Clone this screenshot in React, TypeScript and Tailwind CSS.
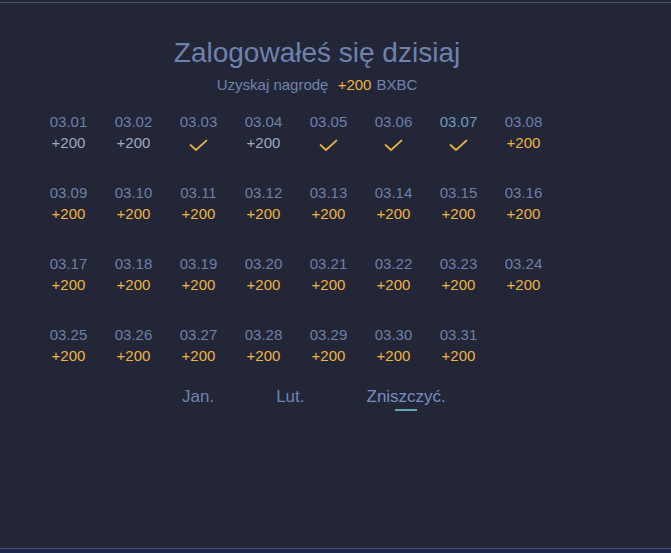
import React from 'react';

type Day = { date: string; state: 'done' | 'past' | 'todo'; today?: boolean };

const days: Day[] = Array.from({ length: 31 }, (_, i) => {
  const n = i + 1;
  const date = `03.${String(n).padStart(2, '0')}`;
  let state: Day['state'] = 'todo';
  if ([3, 5, 6, 7].includes(n)) state = 'done';
  else if (n < 8) state = 'past';
  return { date, state, today: n === 7 };
});

function Check() {
  return (
    <svg width="19" height="13" viewBox="0 0 19 13" fill="none">
      <path d="M1.5 6 L7 11 L17.5 1.5" stroke="#e3b04a" strokeWidth="1.7" strokeLinecap="round" strokeLinejoin="round" />
    </svg>
  );
}

export default function App() {
  const tabs = ['Jan.', 'Lut.', 'Zniszczyć.'];
  return (
    <div className="h-[553px] w-[671px] bg-[#222637] flex flex-col font-['Liberation_Sans',Arial,sans-serif] overflow-hidden">
      <div className="h-[2px]" />
      <div className="h-px bg-[#4a5270]" />
      <div className="flex-1 flex flex-col">
        <div className="w-[634px] mt-[33px] text-center">
          <h1 className="text-[28px] leading-[34px] text-[#6f82ae]">Zalogowałeś się dzisiaj</h1>
          <p className="mt-[5px] text-[15px] leading-[20px] text-[#7284ab]">
            Uzyskaj nagrodę <span className="ml-[5px] text-[#f0b443]">+200</span>
            <span className="ml-[5px]">BXBC</span>
          </p>
        </div>

        <div className="ml-[36px] mt-[16px] w-[520px] grid grid-cols-8 gap-y-[29px]">
          {days.map((d) => (
            <div key={d.date} className="flex flex-col items-center text-[15px] leading-[21px]">
              <span className={d.today ? 'text-[#6c9cc0]' : 'text-[#6e80a9]'}>{d.date}</span>
              <div className="h-[21px] flex items-center justify-center">
                {d.state === 'done' ? (
                  <span className="mt-[5px]"><Check /></span>
                ) : (
                  <span className={d.state === 'past' ? 'text-[#9eaac4]' : 'text-[#f0b443]'}>+200</span>
                )}
              </div>
            </div>
          ))}
        </div>

        <div className="mt-[19px] ml-[182px] flex gap-[62px] text-[17px] leading-[24px]">
          {tabs.map((t, i) => (
            <div key={t} className="flex flex-col items-center">
              <span className={i === 2 ? 'text-[#7b8cc2]' : 'text-[#7083b0]'}>{t}</span>
              <div className={i === 2 ? 'h-[2px] w-[22px] bg-[#5fa8b4]' : 'h-[2px] w-[22px]'} />
            </div>
          ))}
        </div>
      </div>
      <div className="h-px bg-[#4a5270]" />
      <div className="h-[4px] bg-[#1f2746]" />
    </div>
  );
}
